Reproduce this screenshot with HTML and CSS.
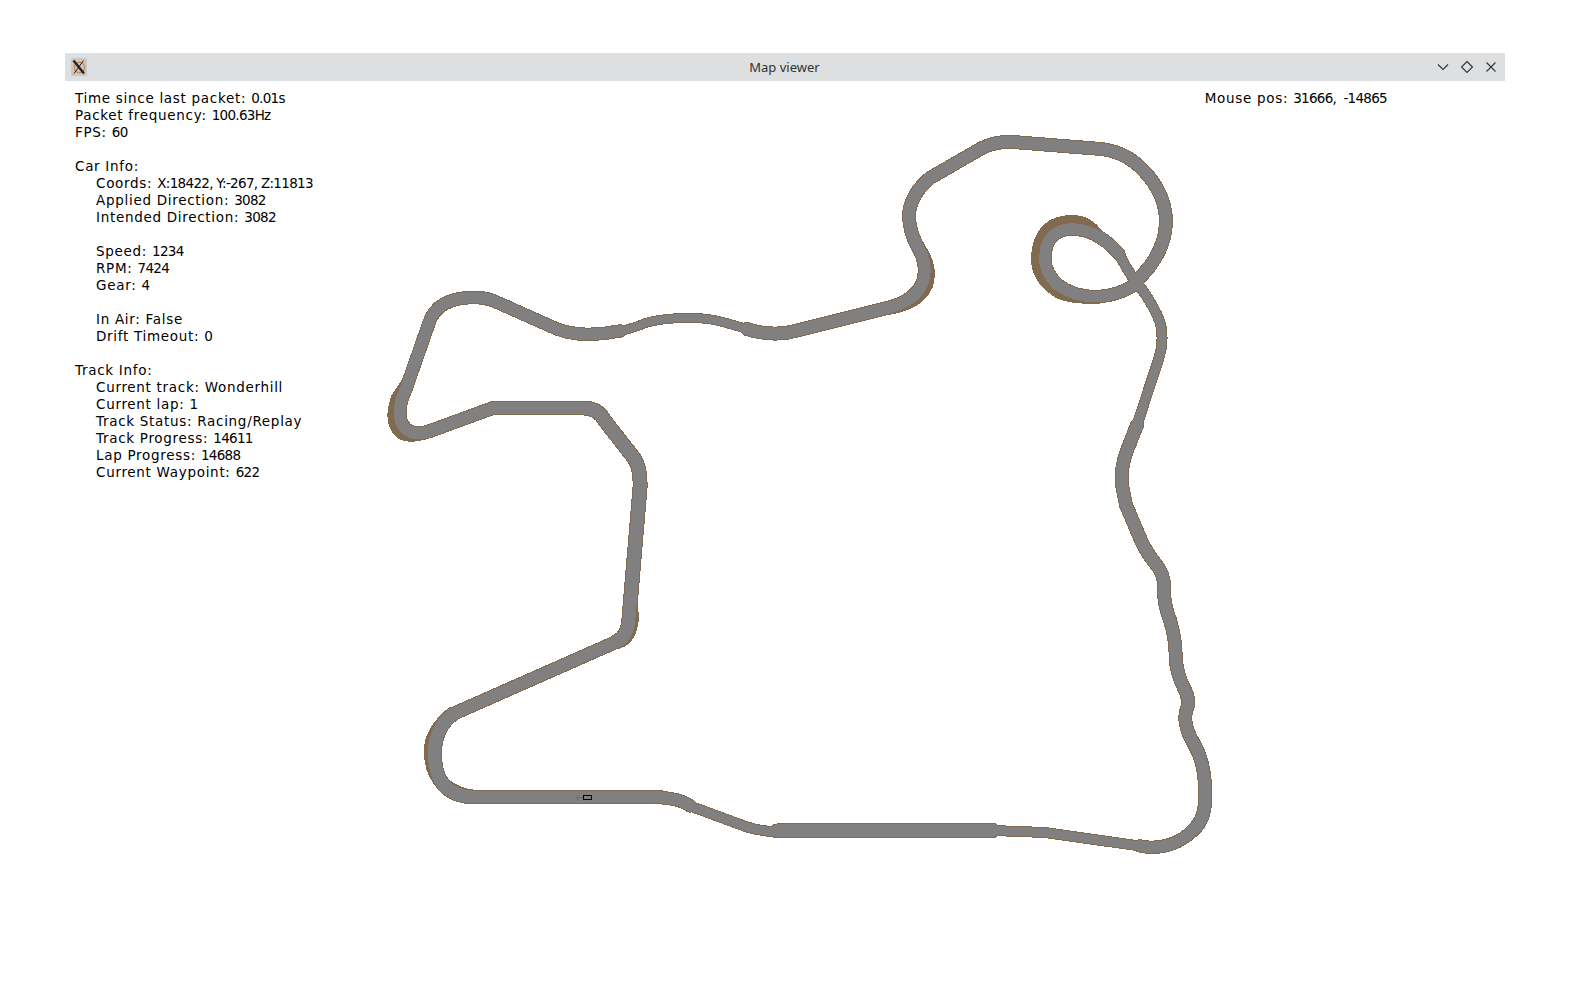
FILE: index.html
```html
<!DOCTYPE html>
<html lang="en">
<head>
    <meta charset="UTF-8">
    <meta name="viewport" content="width=device-width, initial-scale=1.0">
    <title>Map viewer</title>
    <link rel="stylesheet" href="styles.css">
</head>
<body>
    <div class="window">
        <div class="title-bar">
            <svg class="app-icon" width="16" height="18" viewBox="0 0 16 18">
                <rect width="16" height="18" rx="2" fill="#c6c8c9"/>
                <circle cx="8.5" cy="9.5" r="5.2" fill="none" stroke="#d98a4a" stroke-width="1.4"/>
                <path d="M2.5 2.5 L13 15.5" stroke="#222" stroke-width="2.4" fill="none"/>
                <path d="M12.5 2.5 L3 15.5" stroke="#222" stroke-width="1" fill="none"/>
            </svg>
            <div class="title">Map viewer</div>
            <div class="controls">
                <svg width="14" height="14" viewBox="0 0 14 14"><path d="M2 4.5 L7 9.5 L12 4.5"/></svg>
                <svg width="14" height="14" viewBox="0 0 14 14"><path d="M7 1.5 L12.5 7 L7 12.5 L1.5 7 Z"/></svg>
                <svg width="14" height="14" viewBox="0 0 14 14"><path d="M2.5 2.5 L11.5 11.5 M11.5 2.5 L2.5 11.5"/></svg>
            </div>
        </div>
        <div class="canvas">
            <svg class="track" viewBox="65 81 1440 869" shape-rendering="crispEdges">
                <defs>
                    <path id="s1" d="M660 797 L473 797"/>
                    <path id="s2" d="M473 797 Q434 795 434.5 753 Q435 727 453 714"/>
                    <path id="s3" d="M453 714 L616 642"/>
                    <path id="s4" d="M616 642 Q628 637 629 618 L640 488 Q641 469 634 458 L605 421 Q598 408 584 408"/>
                    <path id="s5" d="M584 408 L493 408"/>
                    <path id="s6" d="M493 408 L430 431 Q414 437 405 428 Q396 418 402 398 L408 383"/>
                    <path id="s7" d="M408 383 L429 323 Q437 298 473 297.5 Q484 297 494 301 L548 325 Q565 334 588 334.5 Q605 334 620 331"/>
                    <path id="s8" d="M620 331 Q635 328 645 323 Q660 319 680 318 Q705 317 723 322 L747 329"/>
                    <path id="s9" d="M747 329 Q758 333 773 333.5 Q785 334 795 331 L885 308.5 Q915 302 923 282 Q928 265 918.5 248 Q909 232 909 215 Q910 195 930 178 L982 148"/>
                    <path id="s10" d="M982 148 Q997 141 1013 142 L1101 149 Q1130 152 1150 178 Q1166 198 1166 223 Q1165 246 1150 266 L1133 286"/>
                    <path id="s11" d="M1133 286 Q1118 295 1100 296.5 Q1076 298 1058 285 Q1044 272 1045 257 Q1046 230 1072 229 Q1097 229 1119 254"/>
                    <path id="s12" d="M1119 254 Q1125 266 1133 278 L1141 288 Q1154 306 1160 322 Q1165 340 1158 361 L1137 425"/>
                    <path id="s13" d="M1137 425 L1130 443 Q1120 465 1122 485 L1126 505 L1140 538 Q1146 552 1155 563 Q1165 574 1164 590 Q1164 605 1170 620 Q1176 640 1175.5 655 Q1176 672 1184 688 Q1191 700 1186 712 Q1183 725 1193 742 Q1205 762 1205 790 L1205 803 Q1204 822 1190 833"/>
                    <path id="s14" d="M1190 833 Q1175 847 1150 847.5 L1140 846"/>
                    <path id="s15" d="M1140 846 L1045 832.5"/>
                    <path id="s16" d="M1045 832.5 L993 830.5"/>
                    <path id="s17" d="M993 830.5 L777 831"/>
                    <path id="s18" d="M777 832 Q760 831 747 827 L690 806"/>
                    <path id="s19" d="M690 806 Q682 799 660 797.5"/>
                </defs>
                <!-- extra width on the outside of the tight corners -->
                <g class="edge kerb">
                    <path d="M408 383 L398 398 Q390 420 400 431 Q406 438 427 432"/>
                    <path d="M918.5 248 Q932 268 926 285 Q918 304 885 308.5"/>
                    <path d="M1100 296.5 Q1070 298 1058 291 Q1037 277 1038 257 Q1040 222 1072 222 Q1088 222 1097 236"/>
                    <path d="M453 714 Q430 731 431 753 Q432 790 473 797"/>
                    <path d="M616 642 Q630 640 632 618 L630.5 600"/>
                </g>
                <g class="edge">
                    <use href="#s1" class="w14"/>
                    <use href="#s2" class="w15"/>
                    <use href="#s3" class="w14"/>
                    <use href="#s4" class="w15"/>
                    <use href="#s5" class="w14"/>
                    <use href="#s6" class="w14"/>
                    <use href="#s7" class="w13"/>
                    <use href="#s8" class="w10"/>
                    <use href="#s9" class="w14"/>
                    <use href="#s10" class="w14"/>
                    <use href="#s11" class="w13"/>
                    <use href="#s12" class="w11"/>
                    <use href="#s13" class="w14"/>
                    <use href="#s14" class="w13"/>
                    <use href="#s15" class="w11"/>
                    <use href="#s16" class="w11"/>
                    <use href="#s17" class="w15"/>
                    <use href="#s18" class="w11"/>
                    <use href="#s19" class="w13"/>
                </g>
                <g class="road">
                    <use href="#s1" class="w14"/>
                    <use href="#s2" class="w15"/>
                    <use href="#s3" class="w14"/>
                    <use href="#s4" class="w15"/>
                    <use href="#s5" class="w14"/>
                    <use href="#s6" class="w14"/>
                    <use href="#s7" class="w13"/>
                    <use href="#s8" class="w10"/>
                    <use href="#s9" class="w14"/>
                    <use href="#s10" class="w14"/>
                    <use href="#s11" class="w13"/>
                    <use href="#s12" class="w11"/>
                    <use href="#s13" class="w14"/>
                    <use href="#s14" class="w13"/>
                    <use href="#s15" class="w11"/>
                    <use href="#s16" class="w11"/>
                    <use href="#s17" class="w15"/>
                    <use href="#s18" class="w11"/>
                    <use href="#s19" class="w13"/>
                </g>
                <path class="heading" d="M583 797.5 H575.5 M577.5 794.5 V800.5"/>
                <rect class="car" x="583.5" y="795.5" width="8" height="4"/>
            </svg>
            <div class="info">
                <div class="group">
                    <div>Time since last packet: <span class="num">0.01s</span></div>
                    <div>Packet frequency: <span class="num">100.63Hz</span></div>
                    <div>FPS: <span class="num">60</span></div>
                </div>
                <div class="group">
                    <div>Car Info:</div>
                    <div class="sub">Coords: <span class="num">X:18422, Y:-267, Z:11813</span></div>
                    <div class="sub">Applied Direction: <span class="num">3082</span></div>
                    <div class="sub">Intended Direction: <span class="num">3082</span></div>
                </div>
                <div class="group sub">
                    <div>Speed: <span class="num">1234</span></div>
                    <div>RPM: <span class="num">7424</span></div>
                    <div>Gear: <span class="num">4</span></div>
                </div>
                <div class="group sub">
                    <div>In Air: False</div>
                    <div>Drift Timeout: <span class="num">0</span></div>
                </div>
                <div class="group">
                    <div>Track Info:</div>
                    <div class="sub">Current track: Wonderhill</div>
                    <div class="sub">Current lap: <span class="num">1</span></div>
                    <div class="sub">Track Status: Racing/Replay</div>
                    <div class="sub">Track Progress: <span class="num">14611</span></div>
                    <div class="sub">Lap Progress: <span class="num">14688</span></div>
                    <div class="sub">Current Waypoint: <span class="num">622</span></div>
                </div>
            </div>
            <div class="mouse-pos">Mouse pos: <span class="num">31666,  -14865</span></div>
        </div>
    </div>
</body>
</html>
```

FILE: styles.css
```css
body {
    margin: 0;
    padding: 53px 65px 0;
    background: #fff;
    color: #000;
    font-family: "DejaVu Sans", sans-serif;
}
.window {
    display: flex;
    flex-direction: column;
    height: 950px;
    overflow: hidden;
}
.title-bar {
    flex: none;
    display: grid;
    grid-template-columns: 1fr auto 1fr;
    align-items: center;
    height: 28px;
    padding: 0 7px 0 6px;
    background: #dedfe0;
    color: #333;
    font-family: "Noto Sans", sans-serif;
    font-size: 13px;
}
.app-icon {
    justify-self: start;
}
.controls {
    justify-self: end;
    display: flex;
    gap: 10px;
}
.controls path {
    fill: none;
    stroke: #333;
    stroke-width: 1.1;
}
.canvas {
    position: relative;
    flex: 1;
    display: flex;
    justify-content: space-between;
    padding: 9px 118px 0 10px;
}
.track {
    position: absolute;
    top: 0;
    left: 0;
    width: 1440px;
    height: 869px;
}
.track path {
    fill: none;
    stroke-linejoin: round;
    stroke-linecap: round;
}
.edge { stroke: #806a50; }
.road { stroke: #808080; }
.kerb { stroke-width: 14; }
.edge .w10 { stroke-width: 10; }
.edge .w11 { stroke-width: 11; }
.edge .w13 { stroke-width: 13.5; }
.edge .w14 { stroke-width: 14; }
.edge .w15 { stroke-width: 15; }
.road .w10 { stroke-width: 8; }
.road .w11 { stroke-width: 9; }
.road .w13 { stroke-width: 11.5; }
.road .w14 { stroke-width: 12; }
.road .w15 { stroke-width: 13; }
.track .heading {
    stroke: #0a84ff;
    stroke-width: 1.5;
    stroke-linecap: butt;
}
.car {
    fill: none;
    stroke: #000;
    stroke-width: 1;
}
.info, .mouse-pos {
    position: relative;
    font-size: 13.5px;
    line-height: 17px;
    letter-spacing: 0.7px;
}
.mouse-pos {
    white-space: pre;
}
.num {
    letter-spacing: -0.7px;
}
.group {
    margin-bottom: 17px;
}
.sub {
    padding-left: 21px;
}
```
